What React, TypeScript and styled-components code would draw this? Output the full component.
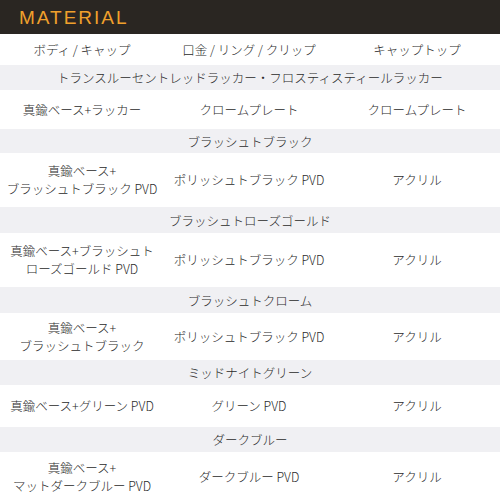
import * as React from 'react'
import styled, { createGlobalStyle } from 'styled-components'

const GlobalStyle = createGlobalStyle`
  html, body {
    margin: 0;
    padding: 0;
    background: #fff;
  }
  body {
    font-family: 'Noto Sans CJK JP', 'Noto Sans', sans-serif;
    color: #2a2a2a;
  }
`

interface Row {
  section: string
  sectionHeight: number
  height: number
  cells: string[][]
}

const rows: Row[] = [
  {
    section: 'トランスルーセントレッドラッカー・フロスティスティールラッカー',
    sectionHeight: 25,
    height: 39,
    cells: [['真鍮ベース+ラッカー'], ['クロームプレート'], ['クロームプレート']],
  },
  {
    section: 'ブラッシュトブラック',
    sectionHeight: 24,
    height: 54,
    cells: [['真鍮ベース+', 'ブラッシュトブラック PVD'], ['ポリッシュトブラック PVD'], ['アクリル']],
  },
  {
    section: 'ブラッシュトローズゴールド',
    sectionHeight: 26,
    height: 54,
    cells: [['真鍮ベース+ブラッシュト', 'ローズゴールド PVD'], ['ポリッシュトブラック PVD'], ['アクリル']],
  },
  {
    section: 'ブラッシュトクローム',
    sectionHeight: 26,
    height: 47,
    cells: [['真鍮ベース+', 'ブラッシュトブラック'], ['ポリッシュトブラック PVD'], ['アクリル']],
  },
  {
    section: 'ミッドナイトグリーン',
    sectionHeight: 25,
    height: 42,
    cells: [['真鍮ベース+グリーン PVD'], ['グリーン PVD'], ['アクリル']],
  },
  {
    section: 'ダークブルー',
    sectionHeight: 25,
    height: 50,
    cells: [['真鍮ベース+', 'マットダークブルー PVD'], ['ダークブルー PVD'], ['アクリル']],
  },
]

const headers = ['ボディ / キャップ', '口金 / リング / クリップ', 'キャップトップ']

const App: React.FC = () => (
  <Page>
    <GlobalStyle />
    <TitleBar>
      <Title>MATERIAL</Title>
    </TitleBar>
    <Grid $height={31}>
      {headers.map((h) => (
        <Cell key={h}>{h}</Cell>
      ))}
    </Grid>
    {rows.map((row) => (
      <React.Fragment key={row.section}>
        <Section $height={row.sectionHeight}>{row.section}</Section>
        <Grid $height={row.height}>
          {row.cells.map((lines, i) => (
            <Cell key={i}>
              {lines.map((l) => (
                <Line key={l}>{l}</Line>
              ))}
            </Cell>
          ))}
        </Grid>
      </React.Fragment>
    ))}
  </Page>
)

export default App

const Page = styled.div`
  width: 500px;
  height: 500px;
  overflow: hidden;
  display: flex;
  flex-direction: column;
  background: #fff;
`

const TitleBar = styled.div`
  height: 34px;
  flex-shrink: 0;
  background: #2a2622;
  display: flex;
  align-items: center;
  padding-left: 19px;
  box-sizing: border-box;
`

const Title = styled.div`
  font-family: 'Liberation Sans', Arial, sans-serif;
  font-size: 19px;
  letter-spacing: 2px;
  color: #f0a02c;
  line-height: 1;
  padding-top: 1px;
`

const Grid = styled.div<{ $height: number }>`
  height: ${(p) => p.$height}px;
  flex-shrink: 0;
  display: grid;
  grid-template-columns: 164px 170px 166px;
  align-items: center;
`

const Cell = styled.div`
  display: flex;
  flex-direction: column;
  align-items: center;
  font-size: 12.5px;
  font-weight: 300;
  line-height: 18px;
  color: #2a2a2a;
  white-space: nowrap;
`

const Line = styled.span``

const Section = styled.div<{ $height: number }>`
  height: ${(p) => p.$height}px;
  flex-shrink: 0;
  background: #f0f0f3;
  display: flex;
  align-items: center;
  justify-content: center;
  font-size: 12.5px;
  font-weight: 300;
  color: #2a2a2a;
  white-space: nowrap;
`
